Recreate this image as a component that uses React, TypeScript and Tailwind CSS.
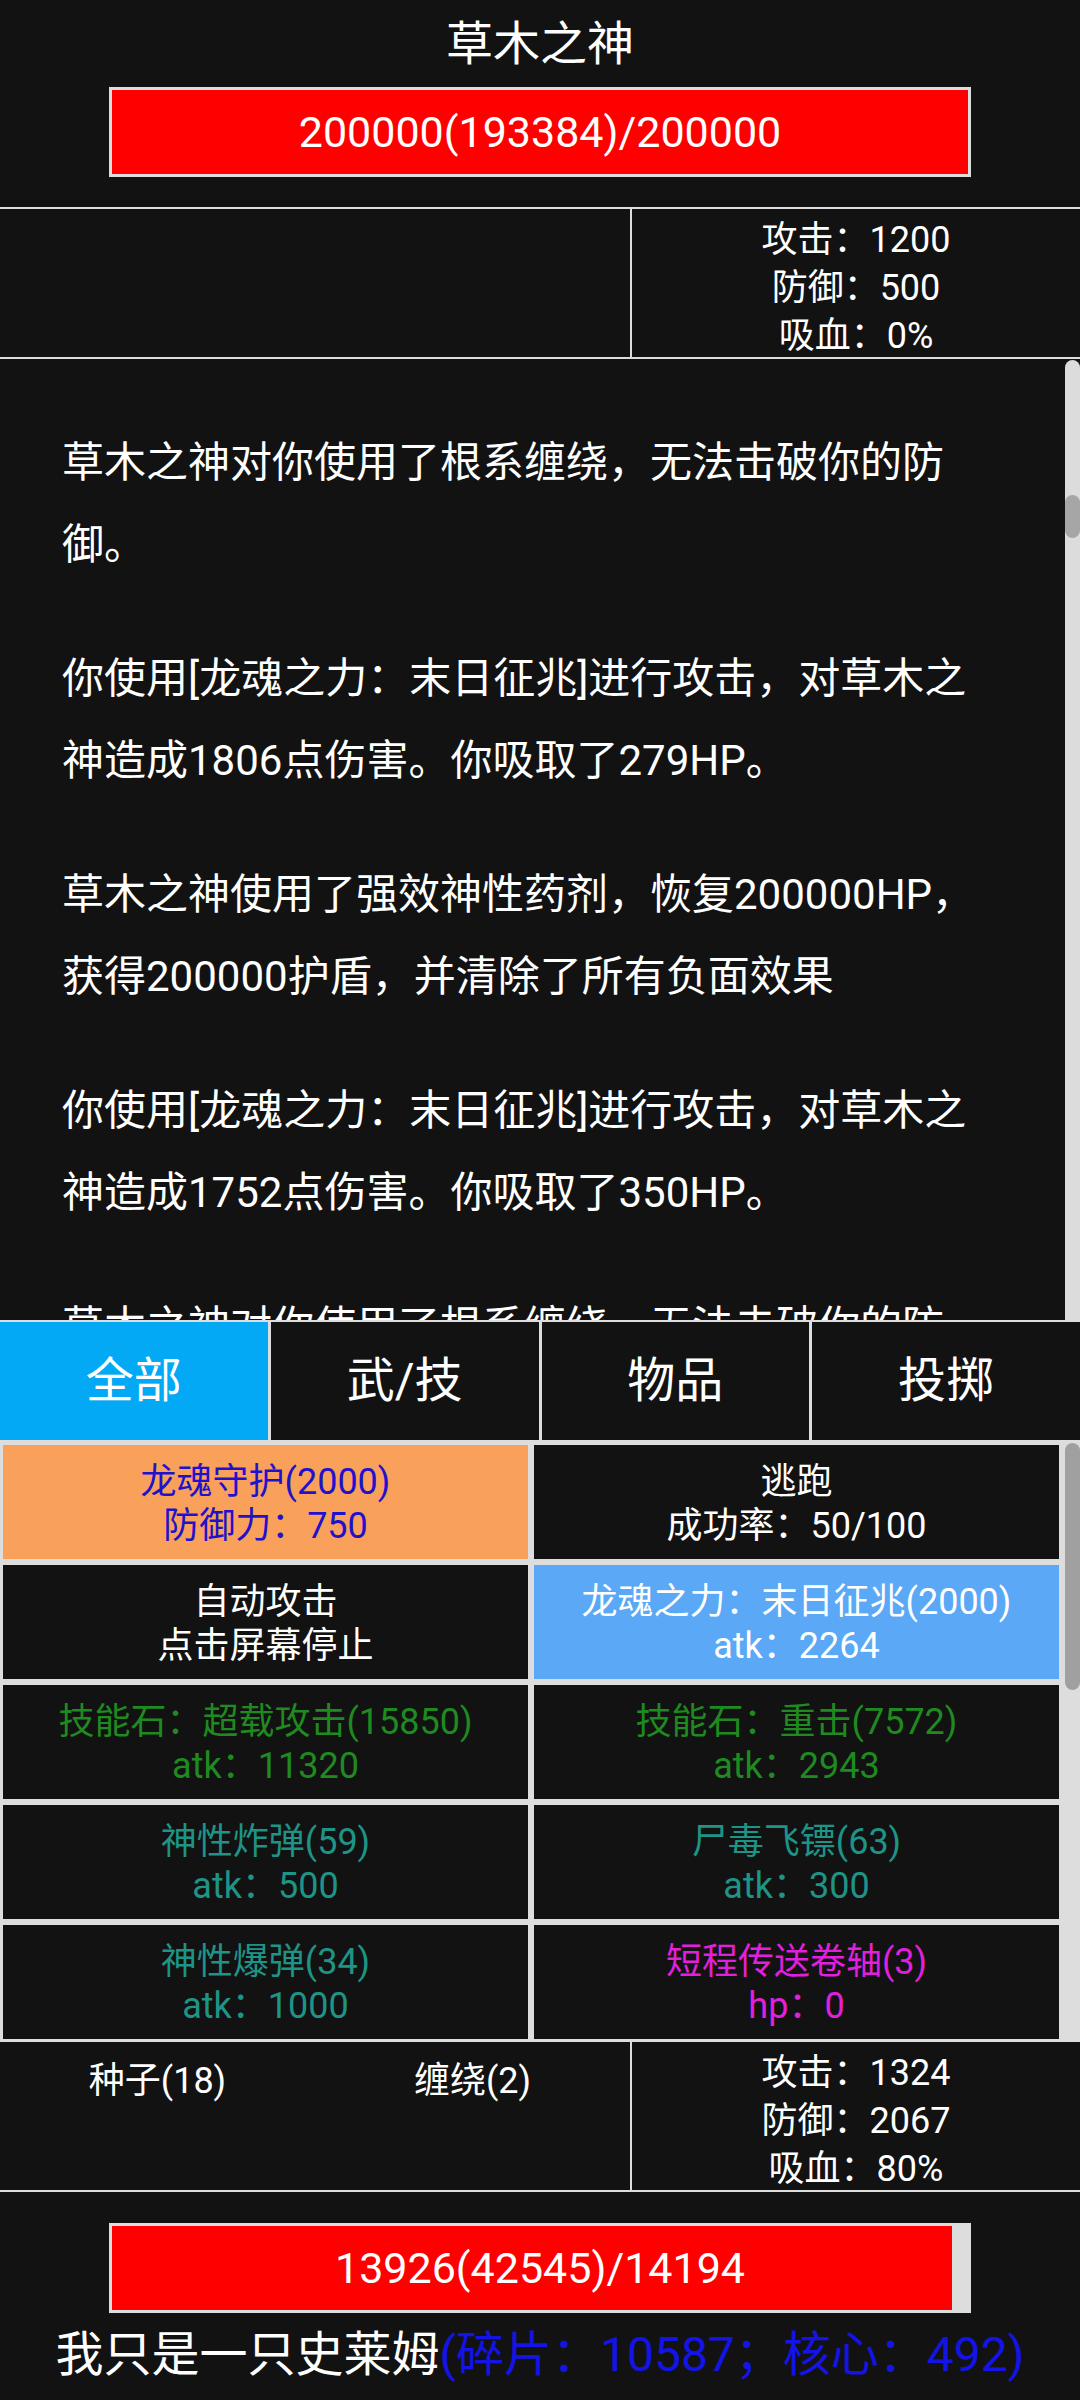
import React from "react";

type Cell = { l1: string; l2: string; bg: string; text: string };

const cells: Cell[] = [
  { l1: "龙魂守护(2000)", l2: "防御力：750", bg: "bg-[#f9a15a]", text: "text-[#2211cc]" },
  { l1: "逃跑", l2: "成功率：50/100", bg: "bg-[#121212]", text: "text-white" },
  { l1: "自动攻击", l2: "点击屏幕停止", bg: "bg-[#121212]", text: "text-white" },
  { l1: "龙魂之力：末日征兆(2000)", l2: "atk：2264", bg: "bg-[#5aa8f6]", text: "text-white" },
  { l1: "技能石：超载攻击(15850)", l2: "atk：11320", bg: "bg-[#121212]", text: "text-[#1f8a1f]" },
  { l1: "技能石：重击(7572)", l2: "atk：2943", bg: "bg-[#121212]", text: "text-[#1f8a1f]" },
  { l1: "神性炸弹(59)", l2: "atk：500", bg: "bg-[#121212]", text: "text-[#1e9486]" },
  { l1: "尸毒飞镖(63)", l2: "atk：300", bg: "bg-[#121212]", text: "text-[#1e9486]" },
  { l1: "神性爆弹(34)", l2: "atk：1000", bg: "bg-[#121212]", text: "text-[#1e9486]" },
  { l1: "短程传送卷轴(3)", l2: "hp：0", bg: "bg-[#121212]", text: "text-[#e020dc]" },
];

const logs: string[][] = [
  ["草木之神对你使用了根系缠绕，无法击破你的防", "御。"],
  ["你使用[龙魂之力：末日征兆]进行攻击，对草木之", "神造成1806点伤害。你吸取了279HP。"],
  ["草木之神使用了强效神性药剂，恢复200000HP，", "获得200000护盾，并清除了所有负面效果"],
  ["你使用[龙魂之力：末日征兆]进行攻击，对草木之", "神造成1752点伤害。你吸取了350HP。"],
  ["草木之神对你使用了根系缠绕，无法击破你的防", "御。"],
];

const tabs = ["全部", "武/技", "物品", "投掷"];

function Stats({ atk, def, drain }: { atk: string; def: string; drain: string }) {
  return (
    <div className="flex flex-col items-center text-[36px] leading-[48px] text-white">
      <div>攻击：{atk}</div>
      <div>防御：{def}</div>
      <div>吸血：{drain}</div>
    </div>
  );
}

export default function App() {
  return (
    <div className="w-[1080px] h-[2400px] overflow-hidden bg-[#121212] text-white font-[Roboto,'Noto_Sans_CJK_SC',sans-serif] flex flex-col">
      {/* Boss header */}
      <div className="flex flex-col items-center pt-[16px] pb-[30px]">
        <div className="text-[47px] leading-[56px]">草木之神</div>
        <div className="mt-[15px] w-[862px] h-[90px] border-[3px] border-[#dddddd] bg-[#dddddd]">
          <div className="w-full h-full bg-[#ff0000] flex items-center justify-center text-[43px] leading-none">
            200000(193384)/200000
          </div>
        </div>
      </div>
      <div className="h-[2px] bg-[#dddddd]" />
      {/* Boss stats */}
      <div className="flex h-[148px]">
        <div className="w-[630px]" />
        <div className="w-[2px] bg-[#dddddd]" />
        <div className="flex-1 flex justify-center pt-[7px]">
          <Stats atk="1200" def="500" drain="0%" />
        </div>
      </div>
      <div className="h-[2px] bg-[#dddddd]" />
      {/* Log */}
      <div className="flex h-[961px]">
        <div className="flex-1 overflow-hidden pl-[62px] pt-[11px]">
          {logs.map((p, i) => (
            <div key={i} className="mt-[52px] text-[42px] leading-[82px] whitespace-nowrap">
              {p.map((line, j) => (
                <div key={j}>{line}</div>
              ))}
            </div>
          ))}
        </div>
        <div className="w-[15px] mt-[1px] bg-[#dcdcdc] rounded-t-full">
          <div className="mt-[135px] h-[43px] bg-[#a6a6a6] rounded-full" />
        </div>
      </div>
      {/* Tabs */}
      <div className="h-[2px] bg-[#dddddd]" />
      <div className="grid grid-cols-4 gap-[3px] bg-[#dddddd] h-[118px]">
        {tabs.map((t, i) => (
          <div
            key={t}
            className={`flex items-center justify-center text-[48px] ${i === 0 ? "bg-[#03a9f4]" : "bg-[#121212]"}`}
          >
            {t}
          </div>
        ))}
      </div>
      {/* Action grid */}
      <div className="flex bg-[#dddddd] h-[602px]">
        <div className="w-[1062px] grid grid-cols-2 auto-rows-[114px] gap-[6px] px-[3px] pt-[5px] pb-[3px]">
          {cells.map((c, i) => (
            <div
              key={i}
              className={`flex flex-col items-center justify-center pt-[3px] text-[36px] leading-[44px] whitespace-nowrap ${c.bg} ${c.text}`}
            >
              <div>{c.l1}</div>
              <div>{c.l2}</div>
            </div>
          ))}
        </div>
        <div className="ml-[3px] w-[15px] pt-[3px]">
          <div className="h-[247px] bg-[#a0a0a0] rounded-full" />
        </div>
      </div>
      {/* Player inventory + stats */}
      <div className="flex h-[148px]">
        <div className="w-[630px] grid grid-cols-2 content-start pt-[15px] text-[36px] leading-[48px]">
          <div className="text-center">种子(18)</div>
          <div className="text-center">缠绕(2)</div>
        </div>
        <div className="w-[2px] bg-[#dddddd]" />
        <div className="flex-1 flex justify-center pt-[7px]">
          <Stats atk="1324" def="2067" drain="80%" />
        </div>
      </div>
      <div className="h-[2px] bg-[#dddddd]" />
      {/* Player HP */}
      <div className="flex flex-col items-center pt-[31px]">
        <div className="relative w-[862px] h-[90px] border-[3px] border-[#dddddd] bg-[#dddddd]">
          <div className="h-full bg-[#ff0000]" style={{ width: `${(13926 / 14194) * 100}%` }} />
          <div className="absolute inset-0 flex items-center justify-center text-[43px] leading-none">
            13926(42545)/14194
          </div>
        </div>
        <div className="mt-[12px] text-[48px] leading-[60px] whitespace-nowrap">
          <span className="text-white">我只是一只史莱姆</span>
          <span className="text-[#1414e6]">(碎片：10587；核心：492)</span>
        </div>
      </div>
    </div>
  );
}
